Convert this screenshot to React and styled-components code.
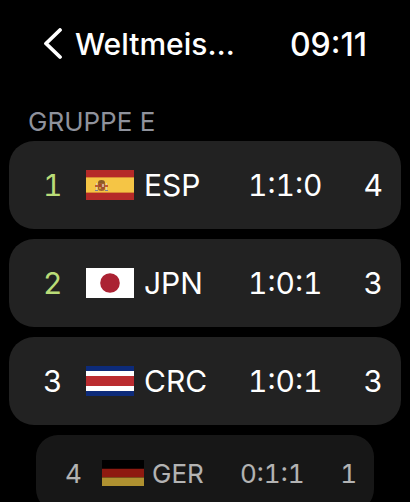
import styled, { createGlobalStyle } from "styled-components";

const teams = [
  { rank: 1, code: "ESP", flag: "es", record: "1:1:0", points: 4, qualified: true },
  { rank: 2, code: "JPN", flag: "jp", record: "1:0:1", points: 3, qualified: true },
  { rank: 3, code: "CRC", flag: "cr", record: "1:0:1", points: 3 },
  { rank: 4, code: "GER", flag: "de", record: "0:1:1", points: 1, receding: true },
];

const flags = {
  es: (
    <>
      <rect width="48" height="30" fill="#b52a28" />
      <rect y="7" width="48" height="16" fill="#d98a35" />
      <rect y="8" width="48" height="14" fill="#f5c545" />
      {/* coat of arms */}
      <rect x="10" y="13" width="1" height="7" fill="#d8cdb4" />
      <rect x="20" y="13" width="1" height="7" fill="#d8cdb4" />
      <path d="M9 15h3v2H9zM19 15h3v2h-3z" fill="#c05a34" />
      <path d="M9 20h3v1H9zM19 20h3v1h-3z" fill="#7c8094" />
      <path d="M12 13c0-2 1-3 3.500-3s3.500 1 3.500 3z" fill="#8a5a28" />
      <path d="M12 13h7v5.500c0 1.800-1.500 2.500-3.500 2.500S12 20.300 12 18.500z" fill="#a0622e" />
      <rect x="13" y="14" width="2" height="3" fill="#b0402a" />
      <rect x="16" y="14" width="2" height="3" fill="#cfaa98" />
      <rect x="13" y="17" width="2" height="2" fill="#d09a38" />
      <rect x="16" y="17" width="2" height="2" fill="#a84a34" />
    </>
  ),
  jp: (
    <>
      <rect width="48" height="30" fill="#fff" />
      <circle cx="24" cy="15" r="9.800" fill="#ab2233" />
    </>
  ),
  cr: (
    <>
      <rect width="48" height="30" fill="#0d2b7a" />
      <rect y="5" width="48" height="20" fill="#fff" />
      <rect y="10" width="48" height="10" fill="#bb2c30" />
    </>
  ),
  de: (
    <>
      <rect width="48" height="30" fill="#000" />
      <rect y="10" width="48" height="10" fill="#cb2518" />
      <rect y="20" width="48" height="10" fill="#f9cf45" />
    </>
  ),
};

const App = () => {
  return (
    <>
      <GlobalStyle />
      <Screen>
        <Header>
          <BackButton type="button">
            <svg width="20" height="32" viewBox="0 0 20 32" aria-hidden="true">
              <path
                d="M17 2 3 15.500l14 13.500"
                fill="none"
                stroke="currentColor"
                strokeWidth="3.800"
                strokeLinecap="round"
                strokeLinejoin="round"
              />
            </svg>
            Weltmeis…
          </BackButton>
          <Clock>09:11</Clock>
        </Header>
        <GroupTitle id="group">GRUPPE E</GroupTitle>
        <Table aria-labelledby="group">
          <tbody>
            {teams.map((team) => (
              <Row key={team.code} $receding={team.receding}>
                <Rank $qualified={team.qualified}>{team.rank}</Rank>
                <Flag>
                  <svg viewBox="0 0 48 30" aria-hidden="true">
                    {flags[team.flag]}
                  </svg>
                </Flag>
                <Code scope="row">{team.code}</Code>
                <Record>{team.record}</Record>
                <Points>{team.points}</Points>
              </Row>
            ))}
          </tbody>
        </Table>
      </Screen>
    </>
  );
};

const GlobalStyle = createGlobalStyle`
  * {
    box-sizing: border-box;
  }

  body {
    margin: 0;
    background: #000;
    color: #fff;
    font-family: Inter, "Liberation Sans", sans-serif;
  }
`;

const Screen = styled.main`
  height: 100vh;
  padding: 24px 9px 0;
  overflow-y: auto;
  scrollbar-width: none;
`;

const Header = styled.header`
  display: flex;
  align-items: center;
  justify-content: space-between;
  height: 40px;
  padding: 0 34px;
  font-size: 30px;
  font-weight: 500;
`;

const BackButton = styled.button`
  display: flex;
  align-items: center;
  gap: 12px;
  padding: 0;
  border: 0;
  background: none;
  color: inherit;
  font: inherit;
`;

const Clock = styled.time`
  font-size: 32px;
`;

const GroupTitle = styled.h2`
  margin: 42px 0 4px;
  padding: 0 19px;
  color: #8f929c;
  font-size: 26px;
  font-weight: 400;
  line-height: 31px;
`;

const Table = styled.table`
  display: block;

  tbody {
    display: flex;
    flex-direction: column;
    gap: 10px;
  }
`;

const Row = styled.tr`
  display: grid;
  grid-template-columns: ${({ $receding }) =>
    $receding ? "29px 42px 1fr 68px 41px" : "33px 48px 1fr 80px 45px"};
  column-gap: ${({ $receding }) => ($receding ? "8px" : "10px")};
  align-items: center;
  height: ${({ $receding }) => ($receding ? "76px" : "88px")};
  margin: ${({ $receding }) => ($receding ? "0 27px" : "0")};
  padding: ${({ $receding }) => ($receding ? "0 17px 0 29px" : "0 18px 0 34px")};
  border-radius: ${({ $receding }) => ($receding ? "22px" : "25px")};
  background: #222;
  font-size: ${({ $receding }) => ($receding ? "26px" : "30px")};
  font-variant-numeric: tabular-nums;
  opacity: ${({ $receding }) => ($receding ? 0.7 : 1)};
`;

const Rank = styled.td`
  padding: 0;
  color: ${({ $qualified }) => ($qualified ? "#b9dc78" : "inherit")};
  text-align: left;
`;

const Flag = styled.td`
  padding: 0;

  svg {
    display: block;
    width: 100%;
  }
`;

const Code = styled.th`
  padding: 0;
  font-weight: 400;
  text-align: left;
`;

const Record = styled.td`
  padding: 0;
  text-align: left;
`;

const Points = styled.td`
  padding: 0;
  text-align: right;
`;

export default App;
